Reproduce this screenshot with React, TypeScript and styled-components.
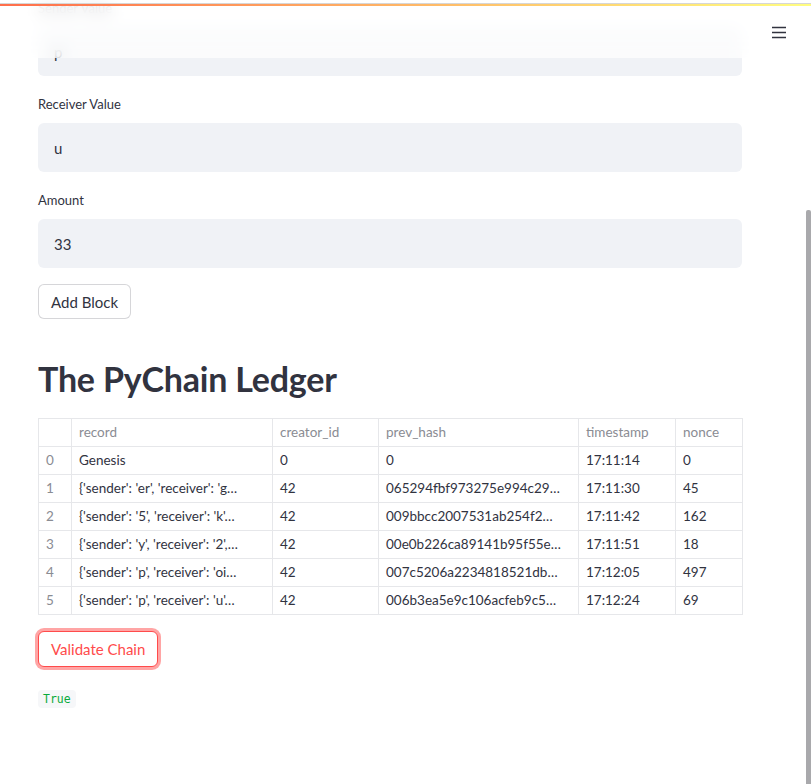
import React from "react";
import styled, { createGlobalStyle } from "styled-components";

const GlobalStyle = createGlobalStyle`
  html, body { margin: 0; padding: 0; background: #ffffff; overflow: hidden; }
  body { font-family: Lato, "Noto Sans", sans-serif; color: #31333f; }
  * { box-sizing: border-box; }
`;

const Header = styled.header`
  position: fixed;
  top: 0;
  left: 0;
  right: 0;
  height: 58px;
  background: rgba(255, 255, 255, 0.7);
  backdrop-filter: blur(8px);
  z-index: 10;
`;

const Decoration = styled.div`
  position: absolute;
  top: 3px;
  left: 0;
  right: 0;
  height: 3px;
  border-top: 1px solid #d6d6d6;
  background: linear-gradient(90deg, rgb(255, 110, 75), rgb(255, 253, 128));
`;

const MenuButton = styled.div`
  position: absolute;
  top: 24px;
  left: 770px;
  width: 18px;
  height: 16px;
  display: flex;
  align-items: center;
  justify-content: center;
`;

const ScrollThumb = styled.div`
  position: fixed;
  top: 210px;
  right: 0;
  width: 5px;
  bottom: 0;
  background: #a9a9ac;
  border-radius: 2px 2px 0 0;
  z-index: 11;
`;

const Main = styled.main`
  display: flex;
  flex-direction: column;
  gap: 16px;
  width: 704px;
  margin: -4px 0 0 38px;
`;

const Field = styled.div`
  display: flex;
  flex-direction: column;
`;

const Label = styled.label`
  height: 24px;
  line-height: 24px;
  margin-bottom: 7px;
  font-size: 13px;
  color: #31333f;
`;

const Input = styled.div`
  height: 49px;
  background: #f0f2f6;
  border-radius: 6px;
  padding-left: 16px;
  display: flex;
  align-items: center;
  font-size: 15px;
  color: #31333f;
`;

const Button = styled.button<{ $focused?: boolean }>`
  align-self: flex-start;
  height: ${(p) => (p.$focused ? "36px" : "35px")};
  padding: 0 12px;
  background: #ffffff;
  border-radius: 6px;
  font-family: Lato, "Noto Sans", sans-serif;
  font-size: 15px;
  border: 1px solid ${(p) => (p.$focused ? "rgb(255, 75, 75)" : "rgba(49, 51, 63, 0.2)")};
  color: ${(p) => (p.$focused ? "rgb(255, 75, 75)" : "#31333f")};
  box-shadow: ${(p) => (p.$focused ? "0 0 0 3px rgba(255, 75, 75, 0.5)" : "none")};
`;

const Title = styled.h2`
  margin: 24px 0 2px 0;
  font-size: 34px;
  font-weight: 700;
  line-height: 1.2;
  color: #31333f;
  letter-spacing: -0.2px;
`;

const Table = styled.table`
  width: 704px;
  border-collapse: collapse;
  table-layout: fixed;
  font-size: 13.5px;
`;

const Col = styled.col<{ $w: number }>`
  width: ${(p) => p.$w}px;
`;

const Cell = styled.td<{ $muted?: boolean }>`
  height: 28px;
  padding: 0 7px;
  border: 1px solid #e6e7ea;
  white-space: nowrap;
  overflow: hidden;
  text-overflow: ellipsis;
  color: ${(p) => (p.$muted ? "#8a8c93" : "#31333f")};
`;

const HeadCell = styled.th`
  height: 28px;
  padding: 0 7px;
  border: 1px solid #e6e7ea;
  font-weight: 400;
  text-align: left;
  color: #8a8c93;
  white-space: nowrap;
`;

const Result = styled.p`
  margin: 0;
  padding-top: 4px;
`;

const Code = styled.code`
  display: inline-block;
  font-family: "DejaVu Sans Mono", "Liberation Mono", monospace;
  font-size: 11.5px;
  line-height: 18px;
  padding: 0 5px;
  border-radius: 4px;
  background: #f6f7f9;
  color: rgb(9, 171, 59);
`;

const rows = [
  ["0", "Genesis", "0", "0", "17:11:14", "0"],
  ["1", "{'sender': 'er', 'receiver': 'g…", "42", "065294fbf973275e994c29…", "17:11:30", "45"],
  ["2", "{'sender': '5', 'receiver': 'k'…", "42", "009bbcc2007531ab254f2…", "17:11:42", "162"],
  ["3", "{'sender': 'y', 'receiver': '2',…", "42", "00e0b226ca89141b95f55e…", "17:11:51", "18"],
  ["4", "{'sender': 'p', 'receiver': 'oi…", "42", "007c5206a2234818521db…", "17:12:05", "497"],
  ["5", "{'sender': 'p', 'receiver': 'u'…", "42", "006b3ea5e9c106acfeb9c5…", "17:12:24", "69"],
];

const widths = [33, 201, 106, 200, 97, 67];
const headers = ["", "record", "creator_id", "prev_hash", "timestamp", "nonce"];

export default function App() {
  return (
    <>
      <GlobalStyle />
      <Header>
        <Decoration />
        <MenuButton>
          <svg width="16" height="13" viewBox="0 0 16 13">
            <path d="M1 1.5h14M1 6.5h14M1 11.5h14" stroke="#31333f" strokeWidth="1.6" />
          </svg>
        </MenuButton>
      </Header>
      <ScrollThumb />
      <Main>
        <Field>
          <Label>Sender Value</Label>
          <Input>p</Input>
        </Field>
        <Field>
          <Label>Receiver Value</Label>
          <Input>u</Input>
        </Field>
        <Field>
          <Label>Amount</Label>
          <Input>33</Input>
        </Field>
        <Button>Add Block</Button>
        <Title>The PyChain Ledger</Title>
        <Table>
          <colgroup>
            {widths.map((w, i) => (
              <Col key={i} $w={w} />
            ))}
          </colgroup>
          <thead>
            <tr>
              {headers.map((h, i) => (
                <HeadCell key={i}>{h}</HeadCell>
              ))}
            </tr>
          </thead>
          <tbody>
            {rows.map((r) => (
              <tr key={r[0]}>
                {r.map((c, i) => (
                  <Cell key={i} $muted={i === 0}>
                    {c}
                  </Cell>
                ))}
              </tr>
            ))}
          </tbody>
        </Table>
        <Button $focused>Validate Chain</Button>
        <Result>
          <Code>True</Code>
        </Result>
      </Main>
    </>
  );
}
